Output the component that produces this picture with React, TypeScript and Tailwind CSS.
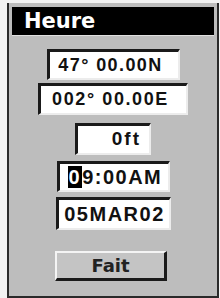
import React from "react";

const sunken =
  "bg-white border-t-[3px] border-l-[3px] border-t-[#1a1a1a] border-l-[#1a1a1a] border-b-2 border-r-2 border-b-[#ececec] border-r-[#ececec] flex items-center";

const mono = { fontFamily: '"Liberation Sans", Arial, sans-serif' };

export default function App() {
  return (
    <div className="w-[220px] h-[298px] bg-[#f2f2f2] pl-[7px] pr-px pt-[3px] overflow-hidden">
      <div className="h-[295px] bg-[#bdbdbd] border-l-2 border-r-2 border-b-2 border-[#2a2a2a] pt-[4px] px-[3px] flex flex-col items-center">
        <div className="w-full h-[29px] bg-black border-b border-[#e0e0e0] flex items-center pl-[12px]">
          <span
            className="text-white text-[21px] font-bold leading-none"
            style={{ fontFamily: '"DejaVu Sans", sans-serif' }}
          >
            Heure
          </span>
        </div>

        <div
          className={`${sunken} mt-[13px] w-[133px] h-[31px] justify-center pl-[2px] pr-[8px]`}
          style={mono}
        >
          <span className="text-[18px] font-bold tracking-[1.4px] text-[#111]">
            47° 00.00N
          </span>
        </div>

        <div
          className={`${sunken} mt-[3px] w-[150px] h-[32px] justify-center pr-[6px]`}
          style={mono}
        >
          <span className="text-[18px] font-bold tracking-[1.6px] text-[#111]">
            002° 00.00E
          </span>
        </div>

        <div
          className={`${sunken} mt-[8px] w-[76px] h-[32px] justify-end pr-[8px]`}
          style={mono}
        >
          <span className="text-[19px] font-bold tracking-[2px] text-[#111]">
            0ft
          </span>
        </div>

        <div
          className={`${sunken} mt-[6px] w-[113px] h-[31px] justify-start pl-[8px]`}
          style={mono}
        >
          <span className="text-[20px] font-bold tracking-[1.5px] text-[#111] flex items-center">
            <span className="bg-black text-white h-[22px] flex items-center px-px">
              0
            </span>
            <span>9:00AM</span>
          </span>
        </div>

        <div
          className={`${sunken} mt-[5px] w-[115px] h-[33px] justify-center pl-[2px]`}
          style={mono}
        >
          <span className="text-[20px] font-bold tracking-[1.5px] text-[#111]">
            05MAR02
          </span>
        </div>

        <button
          className="mt-[21px] w-[112px] h-[30px] bg-[#c4c4c4] border-t-2 border-l-2 border-t-[#f4f4f4] border-l-[#f4f4f4] border-b-[3px] border-r-[3px] border-b-[#1a1a1a] border-r-[#1a1a1a] flex items-center justify-center mr-[4px]"
        >
          <span
            className="text-[18px] font-bold text-[#222] leading-none"
            style={{ fontFamily: '"DejaVu Sans", sans-serif' }}
          >
            Fait
          </span>
        </button>
      </div>
    </div>
  );
}
